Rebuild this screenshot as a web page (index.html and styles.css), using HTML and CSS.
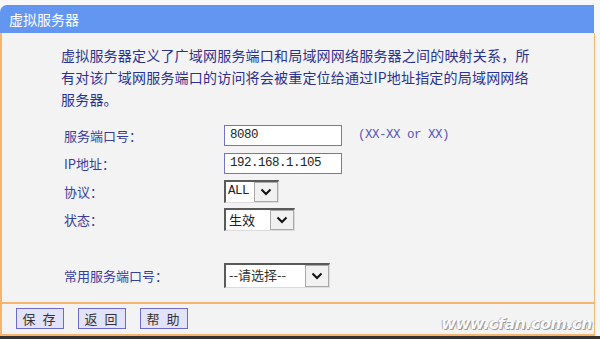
FILE: index.html
```html
<!doctype html>
<html lang="zh-CN">
<head>
    <meta charset="UTF-8">
    <meta name="viewport" content="width=device-width, initial-scale=1.0">
    <title>虚拟服务器</title>
    <link rel="stylesheet" href="styles.css">
</head>
<body>

<div class="frame">
    <div class="title-bar">虚拟服务器</div>

    <div class="panel">
        <p class="desc">
            虚拟服务器定义了广域网服务端口和局域网网络服务器之间的映射关系，所<br>
            有对该广域网服务端口的访问将会被重定位给通过IP地址指定的局域网网络<br>
            服务器。
        </p>

        <div class="form">
            <div class="row">
                <span class="label">服务端口号：</span>
                <span class="text-box">8080</span>
                <span class="hint">(XX-XX or XX)</span>
            </div>
            <div class="row">
                <span class="label">IP地址：</span>
                <span class="text-box">192.168.1.105</span>
            </div>
            <div class="row">
                <span class="label">协议：</span>
                <span class="select select-proto">
                    <span class="select-value">ALL</span>
                    <span class="select-arrow">
                        <svg width="12" height="8" viewBox="0 0 12 8"><path d="M1.5 1.5 L6 6 L10.5 1.5" fill="none" stroke="#111" stroke-width="2"/></svg>
                    </span>
                </span>
            </div>
            <div class="row">
                <span class="label">状态：</span>
                <span class="select select-state">
                    <span class="select-value cjk">生效</span>
                    <span class="select-arrow">
                        <svg width="12" height="8" viewBox="0 0 12 8"><path d="M1.5 1.5 L6 6 L10.5 1.5" fill="none" stroke="#111" stroke-width="2"/></svg>
                    </span>
                </span>
            </div>
            <div class="row row-common">
                <span class="label">常用服务端口号：</span>
                <span class="select select-common">
                    <span class="select-value cjk">--请选择--</span>
                    <span class="select-arrow">
                        <svg width="12" height="8" viewBox="0 0 12 8"><path d="M1.5 1.5 L6 6 L10.5 1.5" fill="none" stroke="#111" stroke-width="2"/></svg>
                    </span>
                </span>
            </div>
        </div>
    </div>

    <div class="footer">
        <button class="btn">保 存</button>
        <button class="btn">返 回</button>
        <button class="btn">帮 助</button>
        <span class="watermark">www.cfan.com.cn</span>
    </div>
</div>

<div class="edge"></div>

</body>
</html>
```

FILE: styles.css
```css
body {
    margin: 0;
    background-color: #f7f7f7;
    font-family: "Noto Sans CJK SC", sans-serif;
    color: #2f3592;
}

.frame {
    width: 595px;
    padding-top: 5px;
}

.title-bar {
    height: 28px;
    line-height: 28px;
    padding-left: 9px;
    background-color: #6396f1;
    color: #fff;
    font-size: 14px;
    border-top-left-radius: 7px;
    width: 585px;
}

.panel {
    background-color: #f3f3f3;
    border-left: 2px solid #f6b46c;
    border-right: 1px solid #f6b46c;
    padding: 11px 0 13px 0;
}

.desc {
    margin: 0 0 11px 59px;
    font-size: 14px;
    line-height: 22px;
    letter-spacing: 0.2px;
    color: #2b3190;
}

.row {
    display: flex;
    align-items: center;
    height: 28px;
    padding-left: 62px;
}

.row-common {
    margin-top: 28px;
}

.label {
    width: 160px;
    font-size: 13px;
    color: #3a3c9c;
}

.text-box {
    box-sizing: border-box;
    width: 118px;
    height: 21px;
    line-height: 19px;
    padding-left: 5px;
    border: 1px solid #7474c6;
    background-color: #fff;
    font-family: "Liberation Mono", monospace;
    font-size: 12.5px;
    letter-spacing: -0.5px;
    color: #222;
}

.hint {
    margin-left: 16px;
    font-family: "Liberation Mono", monospace;
    font-size: 12.5px;
    letter-spacing: -0.5px;
    color: #5656c0;
}

.select {
    box-sizing: border-box;
    display: flex;
    height: 23px;
    border-top: 2px solid #5a5a5a;
    border-left: 2px solid #5a5a5a;
    border-right: 1px solid #dcdcdc;
    border-bottom: 1px solid #dcdcdc;
    background-color: #fff;
}

.select-proto {
    width: 55px;
}

.select-state {
    width: 71px;
}

.select-common {
    width: 106px;
    height: 25px;
}

.select-value {
    flex: 1;
    padding-left: 2px;
    font-family: "Liberation Mono", monospace;
    font-size: 12.5px;
    letter-spacing: -0.5px;
    line-height: 19px;
    color: #222;
}

.select-value.cjk {
    font-family: "Noto Sans CJK SC", sans-serif;
    font-size: 13px;
    letter-spacing: 0;
    padding-left: 3px;
}

.select-common .select-value {
    line-height: 20px;
    color: #333;
}

.select-arrow {
    display: flex;
    align-items: center;
    justify-content: center;
    width: 22px;
    background-color: #f1f1f1;
    border: 1px solid #a9a9a9;
}

.footer {
    position: relative;
    display: flex;
    gap: 14px;
    height: 34px;
    padding: 4px 0 0 14px;
    box-sizing: border-box;
    background-color: #f3f3f3;
    border-top: 2px solid #f6b46c;
    border-left: 2px solid #f6b46c;
    border-right: 1px solid #f6b46c;
    border-bottom: 2px solid #f6b46c;
}

.btn {
    width: 48px;
    height: 21px;
    padding: 0;
    border: 1px solid #6c6cc8;
    background-color: #e2e2f8;
    color: #333;
    font-family: "Noto Sans CJK SC", sans-serif;
    font-size: 13px;
    line-height: 19px;
    letter-spacing: 2px;
}

.watermark {
    position: absolute;
    right: 2px;
    bottom: 1px;
    font-family: "DejaVu Sans", sans-serif;
    font-size: 16px;
    font-weight: bold;
    font-style: italic;
    letter-spacing: -0.5px;
    color: #fafafa;
    text-shadow: 1px 1px 0 #9a9a9a, -1px 0 0 #b0b0b0;
}

.edge {
    height: 3px;
    background-color: #333;
}
```
